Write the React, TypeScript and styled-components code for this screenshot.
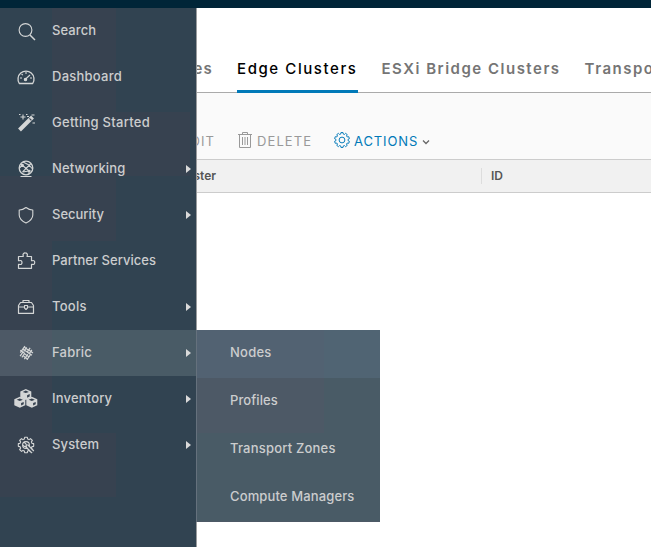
import React from 'react';
import styled, { createGlobalStyle, css } from 'styled-components';

const GlobalStyle = createGlobalStyle`
  * { box-sizing: border-box; }
  body { margin: 0; background: #fff; font-family: Inter, 'Noto Sans', sans-serif; }
`;

const shade = '#374250';
const patch = (color: string) => `linear-gradient(${color}, ${color})`;

const Screen = styled.div`
  display: flex;
  flex-direction: column;
  width: 651px;
  height: 547px;
  overflow: hidden;
`;
const TopBar = styled.header`
  flex: none;
  height: 8px;
  background: #002538;
`;
const Body = styled.div`
  flex: 1;
  display: flex;
  min-height: 0;
`;

const Sidebar = styled.nav`
  position: relative;
  z-index: 1;
  flex: none;
  width: 197px;
  border-right: 1px solid #9a9c9e;
  background-color: #314351;
  background-image: ${patch(shade)}, ${patch(shade)}, ${patch(shade)}, ${patch(shade)};
  background-repeat: no-repeat;
  background-position: 52px 0, 52px 104px, 0 168px, 52px 425px;
  background-size: 64px 233px, 138px 64px, 52px 321px, 64px 64px;
`;
const NavItem = styled.div<{ $active?: boolean }>`
  position: relative;
  display: flex;
  align-items: center;
  height: 46px;
  padding-right: 5px;
  ${(p) =>
    p.$active &&
    css`
      background: linear-gradient(90deg, #4d5966 52px, #495b66 52px);
    `}
`;
const IconSlot = styled.span`
  flex: none;
  display: flex;
  justify-content: center;
  width: 52px;
  height: 24px;
  color: #d4d6d6;
  svg { display: block; }
`;
const Label = styled.span<{ $tracking: number }>`
  flex: 1;
  margin-bottom: 2px;
  font-size: 13px;
  font-weight: 500;
  line-height: 18px;
  white-space: nowrap;
  color: #cccdce;
  letter-spacing: ${(p) => p.$tracking}px;
`;
const Caret = styled.span`
  border: 4px solid transparent;
  border-left: 5px solid #dadada;
  border-right: 0;
`;

const Submenu = styled.div`
  position: absolute;
  left: 196px;
  top: 0;
  width: 184px;
  height: 192px;
  border-left: 1px solid #65717d;
  background-color: #495b66;
  background-image: ${patch('#4d5966')}, ${patch('#4d5966')};
  background-repeat: no-repeat;
  background-size: 127px 55px, 100% 1px;
  background-position: 0 48px, 0 100%;
`;
const SubItem = styled.div<{ $active?: boolean }>`
  display: flex;
  align-items: center;
  height: 48px;
  padding: 0 0 2px 33px;
  background: ${(p) => (p.$active ? 'linear-gradient(90deg, #526272 127px, #506473 127px)' : 'transparent')};
`;

const Content = styled.main`
  flex: 1;
  min-width: 0;
  overflow: hidden;
`;
const Tabs = styled.div`
  display: flex;
  gap: 24px;
  height: 85px;
  border-bottom: 1px solid #aaa;
`;
const Tab = styled.div<{ $active?: boolean; $width?: number; $tracking?: number }>`
  flex: none;
  display: flex;
  justify-content: ${(p) => (p.$width ? 'flex-end' : 'flex-start')};
  width: ${(p) => (p.$width ? `${p.$width}px` : 'auto')};
  height: 85px;
  padding-top: 51px;
  font-size: 15px;
  font-weight: ${(p) => (p.$active ? 500 : 600)};
  line-height: 20px;
  white-space: nowrap;
  letter-spacing: ${(p) => p.$tracking ?? 1.5}px;
  color: ${(p) => (p.$active ? '#000' : '#757575')};
  border-bottom: ${(p) => (p.$active ? '3px solid #0079b8' : '0')};
`;
const Toolbar = styled.div`
  display: flex;
  align-items: center;
  height: 66px;
  padding-top: 30px;
  background: #fafafa;
`;
const Action = styled.div<{ $primary?: boolean; $width: number; $end?: boolean }>`
  flex: none;
  display: flex;
  align-items: center;
  justify-content: ${(p) => (p.$end ? 'flex-end' : 'flex-start')};
  width: ${(p) => p.$width}px;
  height: 18px;
  margin-bottom: 2px;
  font-size: 13px;
  line-height: 18px;
  white-space: nowrap;
  letter-spacing: ${(p) => (p.$primary ? 0.9 : 1.1)}px;
  color: ${(p) => (p.$primary ? '#0079b8' : '#999')};
  svg { display: block; flex: none; }
`;
const ActionText = styled.span<{ $left: number }>`
  margin: 2px 0 0 ${(p) => p.$left}px;
`;
const TrashIcon = styled.svg`
  margin-left: 22px;
`;
const Chevron = styled.svg`
  margin: 3px 0 0 4px;
`;
const HeadRow = styled.div`
  display: flex;
  align-items: center;
  height: 34px;
  border: solid #ccc;
  border-width: 1px 0;
  background: #f1f1f1;
  font-size: 12px;
  font-weight: 600;
  line-height: 16px;
  color: #555;
`;
const FirstHead = styled.div`
  display: flex;
  justify-content: flex-end;
  width: 19px;
  white-space: nowrap;
`;
const NextHead = styled.div`
  height: 16px;
  margin-left: 265px;
  padding-left: 9px;
  border-left: 1px solid #ddd;
`;

const gearPath = (teeth: number, r1: number, r2: number) => {
  const pts: string[] = [];
  const step = (Math.PI * 2) / teeth;
  for (let i = 0; i < teeth; i++) {
    [[-0.34, r1], [-0.22, r2], [0.22, r2], [0.34, r1]].forEach(([o, r]) => {
      const a = (i + o) * step - Math.PI / 2;
      pts.push(`${(12 + r * Math.cos(a)).toFixed(2)} ${(12 + r * Math.sin(a)).toFixed(2)}`);
    });
  }
  return `M${pts.join('L')}Z`;
};

const Icon = ({ children }: { children: React.ReactNode }) => (
  <svg width="24" height="24" viewBox="0 0 24 24" fill="none" stroke="currentColor" strokeWidth="1.1" strokeLinejoin="round">
    {children}
  </svg>
);

const icons = {
  search: (
    <Icon>
      <circle cx="11.5" cy="11" r="6.4" />
      <path d="M16 16L21 21" strokeWidth="1.5" />
    </Icon>
  ),
  dashboard: (
    <Icon>
      <path d="M5.3 18.5A8 8 0 1 1 18.7 18.5Z" strokeWidth="1.3" />
      <path d="M12 7v2M6 13h2M16 13h2M7.6 9l1.2 1.2M10.5 15l5.5-5" />
      <circle cx="11.5" cy="14.5" r="1.2" fill="currentColor" />
    </Icon>
  ),
  wand: (
    <Icon>
      <path d="M5.5 19L18.5 6" strokeWidth="4" strokeLinejoin="miter" />
      <path d="M15.4 7.3l2 2" stroke={shade} />
      <path d="M9 3.5v5M6.5 6h5M5 3.5h1.5M12 3.5h1.5M18.5 12h2.5M13 5.5h2M17.5 4h3" />
    </Icon>
  ),
  network: (
    <Icon>
      <circle cx="12" cy="11" r="6.8" strokeWidth="1.3" />
      <path d="M7 7l8 7M17 6.5L8.5 15M9 5l6 3M5.5 11l3-3M15 8l3.5 4M15 14l-6.5 1M15 14v3M6.5 19.5h11" />
      <circle cx="8.5" cy="8.2" r=".8" fill="currentColor" />
      <circle cx="15.3" cy="14" r=".8" fill="currentColor" />
    </Icon>
  ),
  shield: (
    <Icon>
      <path d="M12 4.5Q15.4 7.1 18.8 7v5c0 4-3.2 6.3-6.8 8-3.6-1.7-6.8-4-6.8-8V7Q8.6 7.1 12 4.5Z" />
    </Icon>
  ),
  puzzle: (
    <Icon>
      <path d="M4.5 7.5H9.2V6.8C8.5 4.9 10 3.7 11.3 3.9c1.6.1 2.6 1.4 1.8 3v.6h4.4v4.2h.8c1.6-.7 2.5.5 2.4 1.8 0 1.5-1.1 2.4-2.4 1.8h-.8v4H4.5v-4h.7c2 .7 2.8-.4 2.8-1.8 0-1.5-1-2.4-2.8-1.8h-.7Z" strokeWidth="1.2" />
    </Icon>
  ),
  toolbox: (
    <Icon>
      <path d="M4.5 10.5L6.5 7.5h11l2 3v7.8h-15ZM9 7.5v-2h6v2M4.5 12h6M13.5 12h6" strokeWidth="1.2" />
      <path d="M10.5 10.5h3v2.5L12 14.5 10.5 13Z" />
    </Icon>
  ),
  fabric: (
    <Icon>
      <g transform="rotate(35 12 12)" strokeWidth="1.25">
        <path d="M7 8.2h5M7 10.6h5M12.5 5.5v5.5M15 6v5M12 13.5h5M12 16h5M9 12.5V18M11.2 13v5" />
        <path d="M7.2 7v8M9.3 7v5M5.7 13h6M12.2 8h5.5M12.2 10.5h6M14.2 12v6M16.6 10v7" />
      </g>
    </Icon>
  ),
  system: (
    <Icon>
      <path d={gearPath(8, 6.2, 7.8)} />
      <circle cx="12" cy="12" r="3.4" />
      <path d="M12.5 12.5l6.3 6.5" strokeWidth="4" />
      <path d="M12.8 12.8l6 6.2" stroke={shade} strokeWidth="1.5" />
      <path d="M10 9l2.3 2.4v2H10L8.8 12" />
    </Icon>
  ),
};

const Cube = ({ x, y }: { x: number; y: number }) => (
  <g transform={`translate(${x} ${y})`}>
    <path d="M0 2.5L5.5 0 11 2.5v6L5.5 11 0 8.5Z" fill="#d4d6d6" />
    <path d="M2.4 2.9l3.1-1.3 3.1 1.3-3.1 1.2ZM6.8 6.2l2.6-1.1v2.4l-2.6 1.3Z" fill={shade} />
  </g>
);
const inventoryIcon = (
  <svg width="24" height="24" viewBox="0 0 24 24">
    <Cube x={6.3} y={2} />
    <Cube x={0.3} y={9.8} />
    <Cube x={12.3} y={9.8} />
  </svg>
);

const navItems: { label: string; icon: React.ReactNode; tracking: number; caret?: boolean; active?: boolean }[] = [
  { label: 'Search', icon: icons.search, tracking: 0.1 },
  { label: 'Dashboard', icon: icons.dashboard, tracking: 0.25 },
  { label: 'Getting Started', icon: icons.wand, tracking: 0.27 },
  { label: 'Networking', icon: icons.network, tracking: 0.12, caret: true },
  { label: 'Security', icon: icons.shield, tracking: 0, caret: true },
  { label: 'Partner Services', icon: icons.puzzle, tracking: 0.04 },
  { label: 'Tools', icon: icons.toolbox, tracking: 0.25, caret: true },
  { label: 'Fabric', icon: icons.fabric, tracking: 0.2, caret: true, active: true },
  { label: 'Inventory', icon: inventoryIcon, tracking: 0.17, caret: true },
  { label: 'System', icon: icons.system, tracking: 0.15, caret: true },
];
const subItems = [
  { label: 'Nodes', tracking: 0.25 },
  { label: 'Profiles', tracking: 0.1 },
  { label: 'Transport Zones', tracking: 0.2 },
  { label: 'Compute Managers', tracking: 0.13 },
];

export default function App() {
  return (
    <Screen>
      <GlobalStyle />
      <TopBar />
      <Body>
        <Sidebar>
          {navItems.map((item) => (
            <NavItem key={item.label} $active={item.active}>
              <IconSlot>{item.icon}</IconSlot>
              <Label $tracking={item.tracking}>{item.label}</Label>
              {item.caret && <Caret />}
              {item.active && (
                <Submenu>
                  {subItems.map((s, i) => (
                    <SubItem key={s.label} $active={i === 0}>
                      <Label $tracking={s.tracking}>{s.label}</Label>
                    </SubItem>
                  ))}
                </Submenu>
              )}
            </NavItem>
          ))}
        </Sidebar>
        <Content>
          <Tabs>
            <Tab $width={16} $tracking={1.2}>Nodes</Tab>
            <Tab $active $tracking={1.58}>Edge Clusters</Tab>
            <Tab>ESXi Bridge Clusters</Tab>
            <Tab>Transport Zones</Tab>
          </Tabs>
          <Toolbar>
            <Action $width={18} $end>
              <ActionText $left={0}>EDIT</ActionText>
            </Action>
            <Action $width={119}>
              <TrashIcon width="16" height="18" viewBox="0 0 16 18" fill="none" stroke="currentColor">
                <path d="M1 3.5h14M5.5 3.5v-2h5v2M2.5 3.5v13h11v-13M5.5 6v8M8 6v8M10.5 6v8" />
              </TrashIcon>
              <ActionText $left={4}>DELETE</ActionText>
            </Action>
            <Action $width={110} $primary>
              <svg width="16" height="16" viewBox="3.7 3.7 16.6 16.6" fill="none" stroke="currentColor">
                <path d={gearPath(10, 6.3, 7.8)} />
                <circle cx="12" cy="12" r="3" />
              </svg>
              <ActionText $left={4}>ACTIONS</ActionText>
              <Chevron width="8" height="6" viewBox="0 0 8 6" fill="none" stroke="#666" strokeWidth="1.3">
                <path d="M1 1.5l3 3 3-3" />
              </Chevron>
            </Action>
          </Toolbar>
          <HeadRow>
            <FirstHead>Edge Cluster</FirstHead>
            <NextHead>ID</NextHead>
          </HeadRow>
        </Content>
      </Body>
    </Screen>
  );
}
